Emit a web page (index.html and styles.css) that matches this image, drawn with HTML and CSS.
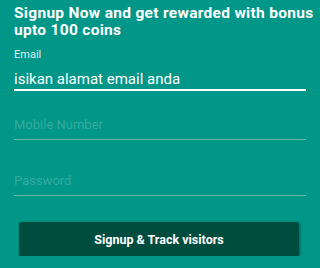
FILE: index.html
```html
<!DOCTYPE html>
<html lang="en">
<head>
  <meta charset="UTF-8"/>
  <meta name="viewport" content="width=device-width, initial-scale=1.0"/>
  <title>Signup</title>
  <link rel="stylesheet" href="styles.css">
</head>
<body>
  <div class="signup">
    <h2 class="signup-title">Signup Now and get rewarded with bonus upto 100 coins</h2>

    <div class="field field-active">
      <label for="email">Email</label>
      <input type="text" id="email" value="isikan alamat email anda">
    </div>

    <div class="field field-mobile">
      <input type="text" id="mobile" placeholder="Mobile Number">
    </div>

    <div class="field field-password">
      <input type="password" id="password" placeholder="Password">
    </div>

    <button class="signup-btn">Signup &amp; Track visitors</button>
  </div>
</body>
</html>
```

FILE: styles.css
```css
:root {
  --teal:      #009688;
  --dark-teal: #004d40;
  --white:     #fff;
  --faint:     rgba(255,255,255,0.22);
  --line:      rgba(255,255,255,0.35);
}
* { box-sizing: border-box; margin:0; padding:0; }
body {
  font-family: Roboto, "Noto Sans", sans-serif;
  background: var(--teal);
  color: var(--white);
}
.signup {
  padding: 5px 14px 0 14px;
}
.signup-title {
  font-size: 15.5px;
  font-weight: 700;
  line-height: 17px;
  letter-spacing: 0.3px;
  margin-right: -12px;
}
.field {
  display: flex;
  flex-direction: column;
}
.field label {
  font-size: 11px;
  line-height: 13px;
  margin-top: 9px;
  color: rgba(255,255,255,0.9);
}
.field input {
  font-family: inherit;
  background: transparent;
  border: none;
  border-bottom: 1px solid var(--line);
  color: var(--white);
  outline: none;
  font-size: 13px;
  height: 25px;
  padding: 0 0 5px 0;
}
.field input::placeholder { color: var(--faint); }
.field-active input {
  font-size: 15px;
  height: 22px;
  margin-top: 8px;
  padding: 0;
  border-bottom: 2px solid var(--white);
}
.field-mobile input { margin-top: 24px; }
.field-password input { margin-top: 31px; }
.signup-btn {
  display: block;
  width: 280px;
  height: 34px;
  margin: 26px 0 0 5px;
  background: var(--dark-teal);
  color: var(--white);
  border: none;
  border-radius: 2px;
  font-family: inherit;
  font-weight: 700;
  font-size: 12.5px;
  box-shadow: 1px 1px 3px rgba(0,0,0,0.35);
}
```
